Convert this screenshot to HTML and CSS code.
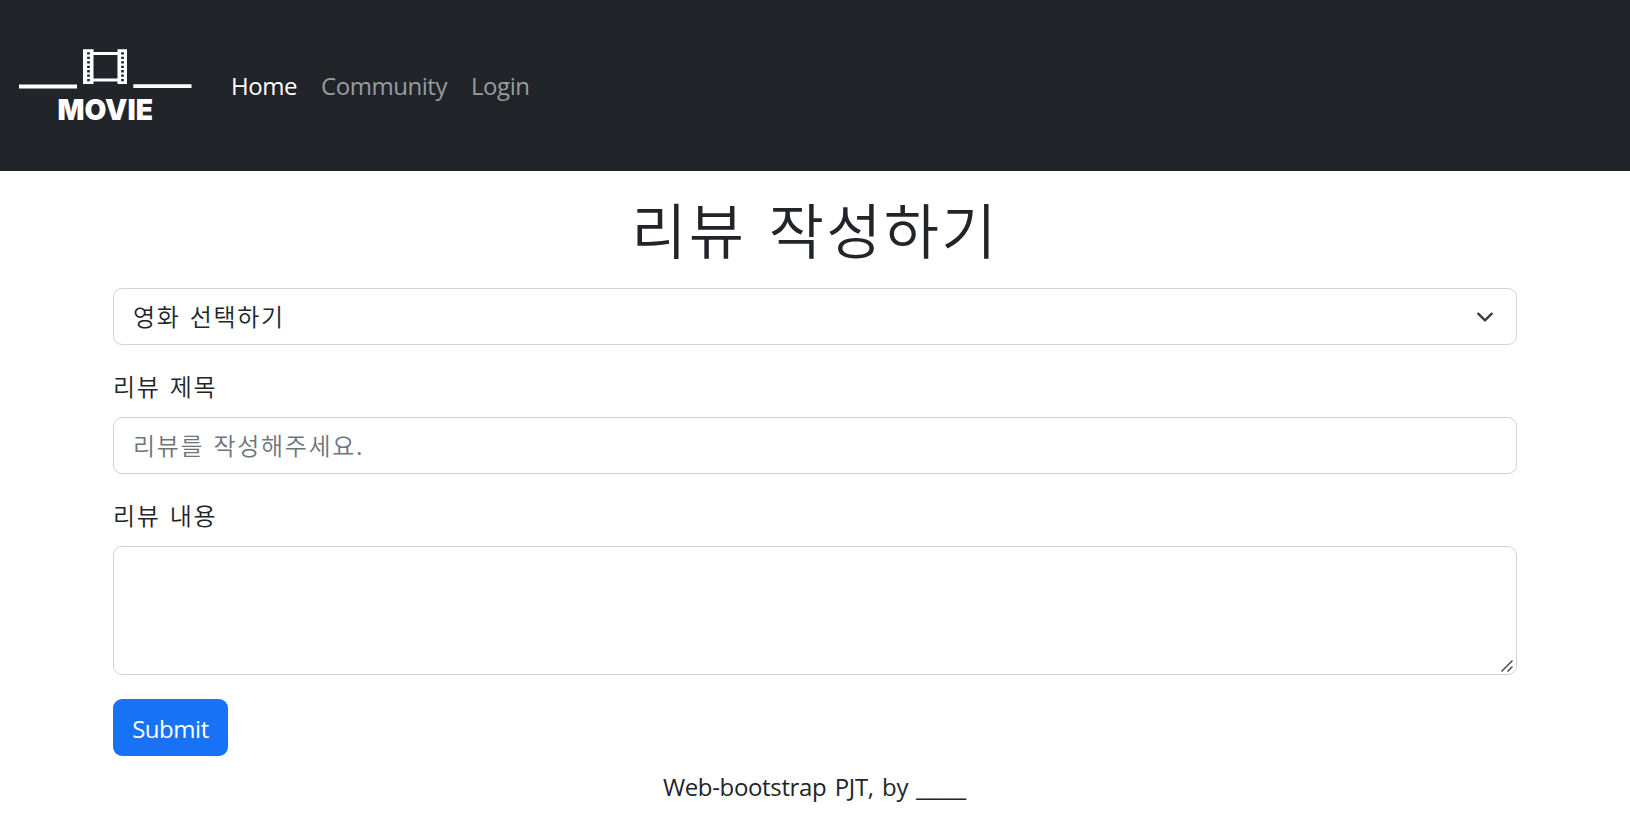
FILE: index.html
```html
<!DOCTYPE html>
<html lang="ko">
<head>
<meta charset="utf-8">
<title>리뷰 작성하기</title>
<link rel="stylesheet" href="styles.css">
</head>
<body>
<nav class="navbar">
  <a class="brand" href="#">
    <svg width="174" height="91" viewBox="18 40 174 91" fill="#fff">
      <path d="M19 84.6h58v3.8H19zM133.300 84.200h58.200v3.800h-58.200z"/>
      <path d="M83 49.300h10.500v2.700h24v-2.700h9.500v34.700h-9.500v-2.500h-24v2.500H83zM93.500 55v23.500h24V55z" fill-rule="evenodd"/>
      <path d="M88.500 52.300V82M122.500 52.300V82" stroke="#212529" stroke-width="2.700" stroke-dasharray="2.300 2.150" />
      <text class="brand-text" x="57.500" y="119.500" textLength="95.500" lengthAdjust="spacingAndGlyphs">MOVIE</text>
    </svg>
  </a>
  <div class="links">
    <a class="link link-home" href="#">Home</a>
    <a class="link link-community" href="#">Community</a>
    <a class="link link-login" href="#">Login</a>
  </div>
</nav>
<main class="container">
  <h1 class="title">리뷰 작성하기</h1>
  <form class="form">
    <div class="select-wrap">
      <select class="control select"><option>영화 선택하기</option></select>
      <svg class="chevron" width="24" height="18" viewBox="0 0 16 16"><path d="m2 5 6 6 6-6" fill="none" stroke="#343a40" stroke-width="2" stroke-linecap="round" stroke-linejoin="round"/></svg>
    </div>
    <label class="label" for="review-title">리뷰 제목</label>
    <input class="control" id="review-title" placeholder="리뷰를 작성해주세요.">
    <label class="label" for="review-body">리뷰 내용</label>
    <div class="area-wrap">
      <textarea class="control area" id="review-body"></textarea>
      <svg class="grip" width="12" height="12" viewBox="0 0 12 12"><path d="M.5 11.500 11.500.5M6.500 11.500 11.500 6.500" fill="none" stroke="#4c4c4c" stroke-width="1.500"/></svg>
    </div>
    <button class="submit" type="button">Submit</button>
  </form>
</main>
<footer class="footer"><span>Web-bootstrap PJT, by</span><span class="blank">_____</span></footer>
</body>
</html>
```
FILE: styles.css
```css
* { box-sizing: border-box; }
body {
  margin: 0;
  background: #fff;
  color: #212529;
  font: 24px/36px "Open Sans", "Noto Sans CJK KR", sans-serif;
}
.navbar {
  height: 171px;
  padding-left: 18px;
  display: flex;
  align-items: center;
  background: #212529;
}
.brand { display: flex; }
.brand-text { font: 900 29px "Inter", sans-serif; }
.links { display: flex; gap: 24px; margin-left: 39px; }
.link { color: #999b9d; text-decoration: none; letter-spacing: -0.45px; }
.link-home { color: #fff; width: 66px; }
.link-community { width: 126px; }
.container { width: 1404px; margin: 0 auto; }
.title {
  margin: 0;
  padding-top: 21px;
  height: 117px;
  text-align: center;
  font: 350 60px/72px "Noto Sans CJK KR", sans-serif;
  letter-spacing: 2.3px;
  word-spacing: 3.2px;
}
.form { display: flex; flex-direction: column; }
.select-wrap, .area-wrap { position: relative; display: flex; }
.control {
  width: 100%;
  height: 57px;
  padding: 8px 18px 10px 19px;
  border: 1px solid #ced4da;
  border-radius: 9px;
  background: #fff;
  color: #212529;
  font: 350 24px/36px "Noto Sans CJK KR", sans-serif;
  letter-spacing: 1.65px;
  word-spacing: 1px;
  appearance: none;
  outline: none;
}
.control::placeholder { color: #6c757d; opacity: 1; }
.chevron { position: absolute; right: 20px; top: 20px; }
.label {
  margin: 23px 0 13px;
  font: 350 24px/36px "Noto Sans CJK KR", sans-serif;
  letter-spacing: 1.65px;
  word-spacing: 1px;
}
.area { height: 129px; resize: none; }
.grip { position: absolute; right: 4px; bottom: 3px; }
.submit {
  align-self: flex-start;
  margin-top: 24px;
  width: 115px;
  height: 57px;
  padding: 3px 0 0;
  border: 0;
  border-radius: 9px;
  background: #1872f6;
  color: #fff;
  font: 24px/36px "Open Sans", sans-serif;
  letter-spacing: -0.45px;
}
.footer {
  display: flex;
  justify-content: center;
  gap: 8px;
  padding-top: 13px;
  letter-spacing: -0.35px;
  word-spacing: 2.5px;
}
.blank { width: 51px; font-weight: 600; letter-spacing: -0.2px; }
```
